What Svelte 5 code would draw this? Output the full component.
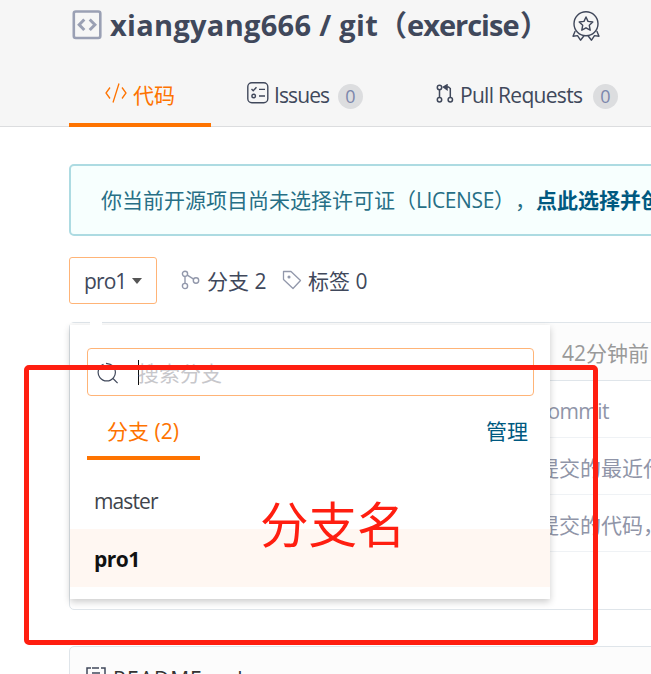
<script>
  const commits = [
    { text: 'commit', latin: true },
    { text: '提交的最近代', latin: false },
    { text: '提交的代码，', latin: false }
  ];
  const branches = ['master', 'pro1'];
  let current = $state('pro1');
</script>

<div class="page">
  <header>
    <div class="title">
      <svg class="repo" width="30" height="30" viewBox="0 0 30 30" fill="none" stroke="#9aa0b4">
        <rect x="1.8" y="1.5" width="26.5" height="26.5" rx="2" stroke-width="2.6" />
        <path d="M12.300 9.500 7.200 14.700 12.300 20M17.700 9.500l5.200 5.200-5.200 5.300" stroke-width="3" />
      </svg>
      <h1><span class="t1">xiangyang666 / git</span><span class="t2">（</span><span class="t3">exercise</span><span class="t4">）</span></h1>
      <svg class="medal" width="28" height="31" viewBox="0 0 28 31" fill="none" stroke="#40485b" stroke-width="1.4" stroke-linejoin="round">
        <circle cx="14" cy="12.8" r="12" />
        <path d="m14 6 2 4.400 4.800.6-3.500 3.300.9 4.900-4.200-2.400-4.200 2.400.9-4.900L7.200 11l4.800-.6z" />
        <path d="M3.200 20 1 25.200l4.500-.6 3 4.600 3.500-4.500M24.800 20l2.200 5.200-4.500-.6-3 4.600-3.500-4.500" />
      </svg>
    </div>
    <nav>
      <div class="tab active">
        <svg width="22" height="20" viewBox="0 0 22 20" fill="none" stroke="#fe7300" stroke-width="1.3">
          <path d="M5 4.500 1 10l4 5.500M17 4.500l4 5.500-4 5.500M14 .5 8 19.500" />
        </svg>
        <span class="code">代码</span>
      </div>
      <div class="tab issues">
        <svg width="22" height="22" viewBox="0 0 22 22" fill="none" stroke="#40485b" stroke-width="1.400">
          <rect x=".8" y=".8" width="20" height="20" rx="4" />
          <path d="m4.500 7 1.700 1.700L9.500 5.300M12 7.400h6M12 14h6" />
          <circle cx="6.700" cy="14" r="1.800" />
        </svg>
        <span class="label">Issues</span>
        <b class="count">0</b>
      </div>
      <div class="tab pulls">
        <svg width="18" height="20" viewBox="0 0 18 20" fill="none" stroke="#40485b" stroke-width="1.500">
          <circle cx="3.500" cy="3.500" r="2.200" /><circle cx="3.500" cy="15.800" r="2.200" /><circle cx="14.300" cy="15.800" r="2.200" />
          <path d="M3.500 5.700v7.900M14.300 13.600V4.500L12.500 3H9" />
          <path d="M11 1 7.500 3 11 5.500z" fill="#40485b" />
        </svg>
        <span class="label">Pull Requests</span>
        <b class="count">0</b>
      </div>
    </nav>
  </header>

  <main>
    <div class="notice"><span>你当前开源项目尚未选择许可证（<i>LICENSE</i>），</span><b>点此选择并创</b></div>

    <div class="tools">
      <button class="picker"><span>pro1</span><i class="caret"></i></button>
      <svg class="bricon" width="19" height="20" viewBox="0 0 19 20" fill="none" stroke="#9298ab" stroke-width="1.400">
        <circle cx="4" cy="3.800" r="2.600" /><circle cx="4" cy="16" r="2.600" /><circle cx="15" cy="10.500" r="2.700" />
        <path d="M4 6.400v7M6.300 5.200l6.300 3.900" />
      </svg>
      <span class="brtext">分支 <i>2</i></span>
      <svg class="tagicon" width="20" height="20" viewBox="0 0 20 20" fill="none" stroke="#9298ab" stroke-width="1.300" stroke-linejoin="round">
        <path d="M1.500 1.500H9l9.500 9-7.500 8L1.500 9.500z" /><circle cx="7" cy="7" r=".9" fill="#9298ab" />
      </svg>
      <span class="tagtext">标签 <i>0</i></span>
    </div>

    <div class="files">
      <div class="row head"><span>42分钟前</span></div>
      {#each commits as commit}
        <div class="row"><span class:latin={commit.latin}>{commit.text}</span></div>
      {/each}
      <div class="dropdown">
        <i class="notch"></i>
        <div class="search">
          <svg width="22" height="22" viewBox="0 0 22 22" fill="none" stroke="#40485b" stroke-width="1.200">
            <path d="M6.500 2.400a8.600 8.600 0 1 0 6.500 0M9 1.400l4.500 1" /><path d="m16 16.500 4.600 4.600" />
          </svg>
          <span class="cursor"></span><span class="hint">搜索分支</span>
        </div>
        <div class="subtabs"><span class="sub">分支 <i>(2)</i></span><span class="manage">管理</span></div>
        <div class="branches">
          {#each branches as branch}
            <div class="branch" class:current={branch === current}><span>{branch}</span></div>
          {/each}
        </div>
      </div>
    </div>

    <div class="readme">
      <svg width="20" height="22" viewBox="0 0 20 22" fill="none" stroke="#40485b" stroke-width="1.500">
        <path d="M5 1H1v20h18V1h-4M6 1h7M6 6h8M6 10h8" />
      </svg>
      <span>README.md</span>
    </div>
  </main>

  <div class="frame"></div>
  <div class="note">分支名</div>
</div>

<style>
  :global(body) { margin: 0; background: #fff; overflow: hidden; }
  .page { position: relative; width: 651px; height: 674px; overflow: hidden; background: #fff; color: #40485b;
    font-family: "Open Sans", "Noto Sans CJK SC", sans-serif; font-size: 21px; line-height: 28px; white-space: nowrap; text-spacing-trim: space-all; }
  .page * { box-sizing: border-box; }
  i { font-style: normal; }
  svg { flex: none; display: block; }
  header { height: 127px; background: #f6f6f6; border-bottom: 1px solid #dcdddf; padding-left: 69px; }
  .title { display: flex; height: 64px; padding-left: 3px; }
  .repo { margin-top: 10px; }
  h1 { margin: 5px 0 0 8px; width: 427px; flex: none; font-size: 29px; line-height: 40px; font-weight: 700; display: flex; }
  h1 span { flex: none; }
  .t1 { letter-spacing: .3px; width: 268px; }
  .t2 { width: 29px; }
  .t3 { width: 113px; letter-spacing: -1px; }
  .t4 { width: 17px; }
  .medal { margin: 11px 0 0 35px; }
  nav { display: flex; height: 63px; }
  .tab { display: flex; align-items: flex-start; padding-top: 18px; }
  .active { width: 142px; border-bottom: 4px solid #fe7300; color: #fe7300; padding-left: 36px; gap: 6px; }
  .active svg { margin-top: 1px; }
  .code { margin-top: -1px; }
  .issues { margin-left: 36px; }
  .label { margin: -1px 9px 0 5px; width: 55px; letter-spacing: -.9px; }
  .count { width: 25px; height: 25px; margin-top: 2px; border-radius: 13px; background: #dcdddf; color: #7c87ac; font-size: 18px; line-height: 25px; font-weight: 400; text-align: center; }
  .pulls { margin-left: 73px; }
  .pulls svg { margin-top: 2px; }
  .pulls .label { margin-left: 6px; margin-right: 8px; width: 125px; letter-spacing: -.7px; }
  .notice { height: 72px; margin: 37px -20px 0 69px; border: 2px solid #addbe2; border-radius: 5px; background: #f7fffe; color: #276f86; padding: 20px 0 0 30px; display: flex; }
  .notice i { letter-spacing: -.4px; }
  .notice b { color: #005980; }
  .tools { display: flex; align-items: center; height: 47px; margin: 21px 0 0 69px; }
  .picker { width: 88px; height: 47px; border: 1px solid #ffb477; border-radius: 3px; background: #fff; padding: 0 0 0 14px; font: inherit; letter-spacing: -.9px; color: #40485b; display: flex; align-items: center; }
  .picker span { width: 48px; text-align: left; }
  .caret { border: 5.500px solid transparent; border-top: 6px solid #555; border-bottom: 0; }
  .bricon { margin-left: 24px; margin-top: -2px; }
  .brtext { margin-left: 7px; width: 59px; }
  .tagicon { margin-left: 16px; margin-top: -2px; }
  .tagtext { margin-left: 6px; }
  .files { position: relative; height: 288px; margin: 18px -20px 0 69px; border: 1px solid #dfe5ea; border-radius: 5px; }
  .row { height: 57px; border-bottom: 1px solid #eff2f5; padding: 16px 0 0 468px; color: #9095a8; }
  .latin { letter-spacing: -.6px; }
  .head { height: 58px; padding-left: 492px; background: #fcfcfc; border-color: #dfe5ea; color: #999; }
  .dropdown { position: absolute; left: 0; top: 2px; width: 480px; height: 274px; background: #fff; box-shadow: 0 3px 7px rgba(0,0,0,.2); padding-top: 23px; }
  .notch { position: absolute; left: 20px; top: -6px; width: 12px; height: 6px; background: #fff; }
  .search { margin-left: 17px; width: 447px; height: 48px; border: 1px solid #ffb477; border-radius: 4px; display: flex; align-items: center; padding-left: 9px; color: #c7c7cb; }
  .search svg { margin-top: 2px; }
  .cursor { width: 1px; height: 25px; background: #111; margin-left: 19px; }
  .hint { margin: 2px 0 0 -1px; }
  .subtabs { display: flex; justify-content: space-between; margin-left: 17px; width: 441px; height: 64px; }
  .sub { width: 113px; border-bottom: 4px solid #fe7300; color: #fe7300; padding: 21px 0 0 20px; }
  .manage { padding-top: 21px; color: #005980; }
  .branches { padding-top: 11px; }
  .branch { height: 58px; padding: 16px 0 0 24px; color: #40444c; letter-spacing: -.9px; }
  .current { background: #fff7f2; color: #111; font-weight: 700; letter-spacing: -.5px; }
  .readme { height: 60px; margin: 36px -20px 0 69px; border: 1px solid #dfe5ea; border-radius: 5px; background: #fcfcfc; display: flex; padding: 20px 0 0 16px; }
  .readme span { margin: -2px 0 0 7px; color: #333; letter-spacing: 1px; }
  .frame { position: absolute; left: 24px; top: 365px; width: 574px; height: 280px; border: 5px solid #ff1e10; border-radius: 5px; }
  .note { position: absolute; left: 260px; top: 492px; color: #ff1e10; font-size: 48.500px; line-height: 64px; }
</style>
